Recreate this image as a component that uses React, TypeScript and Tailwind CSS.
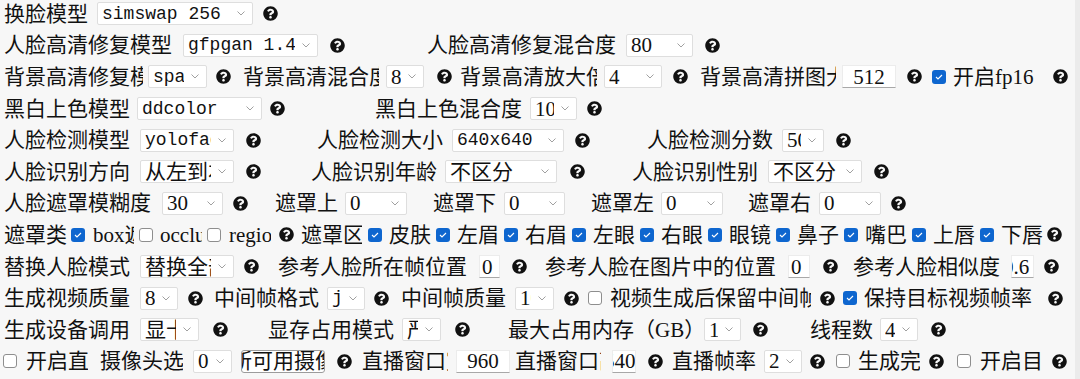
import React from 'react';
import { FaQuestionCircle } from 'react-icons/fa';

// small building blocks for the settings rows
const Lbl = ({ t, c = '' }: { t: string; c?: string }) => (
  <span className={`block shrink-0 overflow-hidden whitespace-nowrap leading-[24px] ${c}`}>{t}</span>
);

const Help = ({ c = '' }: { c?: string }) => (
  <span className={`flex shrink-0 items-center ${c}`}>
    <FaQuestionCircle size={15} className="text-[#111]" />
  </span>
);

const Sel = ({ v, c, mono }: { v: string; c: string; mono?: boolean }) => (
  <div className={`flex h-[23px] shrink-0 items-center rounded-[2px] border border-[#dedede] bg-white pl-[4px] ${c}`}>
    <span
      className={`min-w-0 flex-1 overflow-hidden whitespace-nowrap leading-[22px] ${
        mono ? "font-['Liberation_Mono','Noto_Sans_CJK_SC',monospace] text-[18px]" : ''
      }`}
    >
      {v}
    </span>
    <svg className="mx-[7px] shrink-0" width="8" height="5" viewBox="0 0 8 5">
      <path d="M0.5 0.5 L4 4 L7.5 0.5" fill="none" stroke="#a0a0a0" strokeWidth="1" />
    </svg>
  </div>
);

const Inp = ({ v, c, inner = '' }: { v: string; c: string; inner?: string }) => (
  <div className={`flex h-[23px] shrink-0 items-center overflow-hidden border border-[#ececec] border-b-[#a8a8a8] bg-white ${c}`}>
    <span className={`whitespace-nowrap leading-[22px] ${inner}`}>{v}</span>
  </div>
);

const Cb = ({ on, c = '' }: { on?: boolean; c?: string }) =>
  on ? (
    <span className={`flex h-[14px] w-[14px] shrink-0 items-center justify-center rounded-[3px] bg-[#0e66cf] ${c}`}>
      <svg width="8" height="6" viewBox="0 0 8 6">
        <path d="M1 3 L3 5 L7 1" fill="none" stroke="#ffffff" strokeWidth="1.1" />
      </svg>
    </span>
  ) : (
    <span className={`block h-[14px] w-[14px] shrink-0 rounded-[3px] border border-[#8e8e8e] bg-white ${c}`} />
  );

const Row = ({ children }: { children: React.ReactNode }) => (
  <div className="flex h-[31.6px] items-center">{children}</div>
);

const maskParts = ['皮肤', '左眉毛', '右眉毛', '左眼', '右眼', '眼镜', '鼻子', '嘴巴', '上唇', '下唇'];

export default function App() {
  return (
    <div className="flex h-[379px] w-[1080px] overflow-hidden bg-[#f7f7f7] font-['Liberation_Serif','Noto_Sans_CJK_SC',serif] text-[21px] text-[#111]">
      <div className="-mt-[2px] flex-1">
        <Row>
          <Lbl t="换脸模型" c="ml-[4px] w-[84px]" />
          <Sel v="simswap 256" c="ml-[9px] w-[156px]" mono />
          <Help c="ml-[10px]" />
        </Row>

        <Row>
          <Lbl t="人脸高清修复模型" c="ml-[4px] w-[168px]" />
          <Sel v="gfpgan 1.4" c="ml-[11px] w-[135px]" mono />
          <Help c="ml-[12px]" />
          <Lbl t="人脸高清修复混合度" c="ml-[82px] w-[189px]" />
          <Sel v="80" c="ml-[10px] w-[67px]" />
          <Help c="ml-[12px]" />
        </Row>

        <Row>
          <Lbl t="背景高清修复模型" c="ml-[4px] w-[139px]" />
          <Sel v="spandrel" c="ml-[5px] w-[59px]" mono />
          <Help c="ml-[9px]" />
          <Lbl t="背景高清混合度" c="ml-[12px] w-[136px]" />
          <Sel v="80" c="ml-[7px] w-[38px]" />
          <Help c="ml-[13px]" />
          <Lbl t="背景高清放大倍数" c="ml-[8px] w-[137px]" />
          <Sel v="4" c="ml-[7px] w-[58px]" />
          <Help c="ml-[11px]" />
          <Lbl t="背景高清拼图大小" c="ml-[12px] w-[136px]" />
          <Inp v="512" c="ml-[6px] w-[54px] justify-center" />
          <Help c="ml-[11px]" />
          <Cb on c="ml-[10px]" />
          <Lbl t="开启fp16" c="ml-[7px] w-[87px]" />
          <Help c="ml-[13px]" />
        </Row>

        <Row>
          <Lbl t="黑白上色模型" c="ml-[4px] w-[126px]" />
          <Sel v="ddcolor" c="ml-[7px] w-[125px]" mono />
          <Help c="ml-[8px]" />
          <Lbl t="黑白上色混合度" c="ml-[90px] w-[147px]" />
          <Sel v="100" c="ml-[8px] w-[47px]" />
          <Help c="ml-[10px]" />
        </Row>

        <Row>
          <Lbl t="人脸检测模型" c="ml-[4px] w-[126px]" />
          <Sel v="yoloface" c="ml-[10px] w-[94px]" mono />
          <Help c="ml-[12px]" />
          <Lbl t="人脸检测大小" c="ml-[56px] w-[126px]" />
          <Sel v="640x640" c="ml-[9px] w-[112px]" mono />
          <Help c="ml-[11px]" />
          <Lbl t="人脸检测分数" c="ml-[57px] w-[126px]" />
          <Sel v="50" c="ml-[9px] w-[42px]" />
          <Help c="ml-[12px]" />
        </Row>

        <Row>
          <Lbl t="人脸识别方向" c="ml-[4px] w-[126px]" />
          <Sel v="从左到右" c="ml-[10px] w-[94px]" />
          <Help c="ml-[12px]" />
          <Lbl t="人脸识别年龄" c="ml-[50px] w-[126px]" />
          <Sel v="不区分" c="ml-[8px] w-[112px]" />
          <Help c="ml-[13px]" />
          <Lbl t="人脸识别性别" c="ml-[47px] w-[126px]" />
          <Sel v="不区分" c="ml-[10px] w-[94px]" />
          <Help c="ml-[12px]" />
        </Row>

        <Row>
          <Lbl t="人脸遮罩模糊度" c="ml-[4px] w-[147px]" />
          <Sel v="30" c="ml-[11px] w-[61px]" />
          <Help c="ml-[10px]" />
          <Lbl t="遮罩上" c="ml-[27px] w-[63px]" />
          <Sel v="0" c="ml-[7px] w-[62px]" />
          <Lbl t="遮罩下" c="ml-[26px] w-[63px]" />
          <Sel v="0" c="ml-[8px] w-[61px]" />
          <Lbl t="遮罩左" c="ml-[26px] w-[63px]" />
          <Sel v="0" c="ml-[7px] w-[62px]" />
          <Lbl t="遮罩右" c="ml-[25px] w-[63px]" />
          <Sel v="0" c="ml-[8px] w-[62px]" />
          <Help c="ml-[10px]" />
        </Row>

        <Row>
          <Lbl t="遮罩类型" c="ml-[4px] w-[63px]" />
          <Cb on c="ml-[4px]" />
          <Lbl t="box遮罩" c="ml-[8px] w-[41px]" />
          <Cb c="ml-[5px]" />
          <Lbl t="occlusion" c="ml-[7px] w-[42px]" />
          <Cb c="ml-[5px]" />
          <Lbl t="region" c="ml-[8px] w-[42px]" />
          <Help c="ml-[8px]" />
          <Lbl t="遮罩区域" c="ml-[7px] w-[61px]" />
          {maskParts.map((p, i) => (
            <React.Fragment key={p}>
              <Cb on c={i === 0 ? 'ml-[6px]' : 'ml-[5px]'} />
              <Lbl t={p} c="ml-[7px] w-[42px]" />
            </React.Fragment>
          ))}
          <Help c="ml-[4px]" />
        </Row>

        <Row>
          <Lbl t="替换人脸模式" c="ml-[4px] w-[126px]" />
          <Sel v="替换全部人脸" c="ml-[10px] w-[94px]" />
          <Help c="ml-[10px]" />
          <Lbl t="参考人脸所在帧位置" c="ml-[19px] w-[189px]" />
          <Inp v="0" c="ml-[12px] w-[21px] pl-[2px]" />
          <Help c="ml-[12px]" />
          <Lbl t="参考人脸在图片中的位置" c="ml-[18px] w-[231px]" />
          <Inp v="0" c="ml-[12px] w-[22px] pl-[2px]" />
          <Help c="ml-[13px]" />
          <Lbl t="参考人脸相似度" c="ml-[15px] w-[147px]" />
          <Inp v="0.6" c="ml-[11px] w-[23px]" inner="-ml-[9px]" />
          <Help c="ml-[10px]" />
        </Row>

        <Row>
          <Lbl t="生成视频质量" c="ml-[4px] w-[126px]" />
          <Sel v="80" c="ml-[10px] w-[38px]" />
          <Help c="ml-[10px]" />
          <Lbl t="中间帧格式" c="ml-[11px] w-[105px]" />
          <Sel v="jpg" c="ml-[8px] w-[38px]" mono />
          <Help c="ml-[9px]" />
          <Lbl t="中间帧质量" c="ml-[12px] w-[105px]" />
          <Sel v="100" c="ml-[9px] w-[39px]" />
          <Help c="ml-[10px]" />
          <Cb c="ml-[9px]" />
          <Lbl t="视频生成后保留中间帧" c="ml-[8px] w-[201px]" />
          <Help c="ml-[9px]" />
          <Cb on c="ml-[8px]" />
          <Lbl t="保持目标视频帧率" c="ml-[7px] w-[168px]" />
          <Help c="ml-[16px]" />
        </Row>

        <Row>
          <Lbl t="生成设备调用" c="ml-[4px] w-[126px]" />
          <Sel v="显卡" c="ml-[10px] w-[59px]" />
          <Help c="ml-[14px]" />
          <Lbl t="显存占用模式" c="ml-[40px] w-[126px]" />
          <Sel v="严格" c="ml-[8px] w-[39px]" />
          <Help c="ml-[14px]" />
          <Lbl t="最大占用内存（GB）" c="ml-[38px] w-[192px]" />
          <Sel v="1" c="ml-[4px] w-[37px]" />
          <Help c="ml-[12px]" />
          <Lbl t="线程数" c="ml-[42px] w-[63px]" />
          <Sel v="4" c="ml-[7px] w-[38px]" />
          <Help c="ml-[13px]" />
        </Row>

        <Row>
          <Cb c="ml-[3px]" />
          <Lbl t="开启直播" c="ml-[9px] w-[62px]" />
          <Lbl t="摄像头选择" c="ml-[12px] w-[83px]" />
          <Sel v="0" c="ml-[10px] w-[39px]" />
          <div className="ml-[9px] flex h-[23px] w-[84px] shrink-0 items-center overflow-hidden rounded-[3px] border border-[#9c9c9c] bg-white">
            <span className="-ml-[11px] whitespace-nowrap leading-[22px]">所可用摄像头</span>
          </div>
          <Help c="ml-[12px]" />
          <Lbl t="直播窗口宽度" c="ml-[10px] w-[86px]" />
          <Inp v="960" c="ml-[8px] w-[54px] justify-center" />
          <Lbl t="直播窗口高度" c="ml-[5px] w-[86px]" />
          <Inp v="540" c="ml-[11px] w-[24px]" inner="-ml-[9px]" />
          <Help c="ml-[12px]" />
          <Lbl t="直播帧率" c="ml-[9px] w-[84px]" />
          <Sel v="25" c="ml-[8px] w-[38px]" />
          <Help c="ml-[8px]" />
          <Cb c="ml-[11px]" />
          <Lbl t="生成完成后打开" c="ml-[8px] w-[62px]" />
          <Help c="ml-[9px]" />
          <Cb c="ml-[13px]" />
          <Lbl t="开启目标检测" c="ml-[9px] w-[63px]" />
          <Help c="ml-[9px]" />
        </Row>
      </div>
      <div className="w-[5px] shrink-0 bg-[#ebebeb]" />
    </div>
  );
}
